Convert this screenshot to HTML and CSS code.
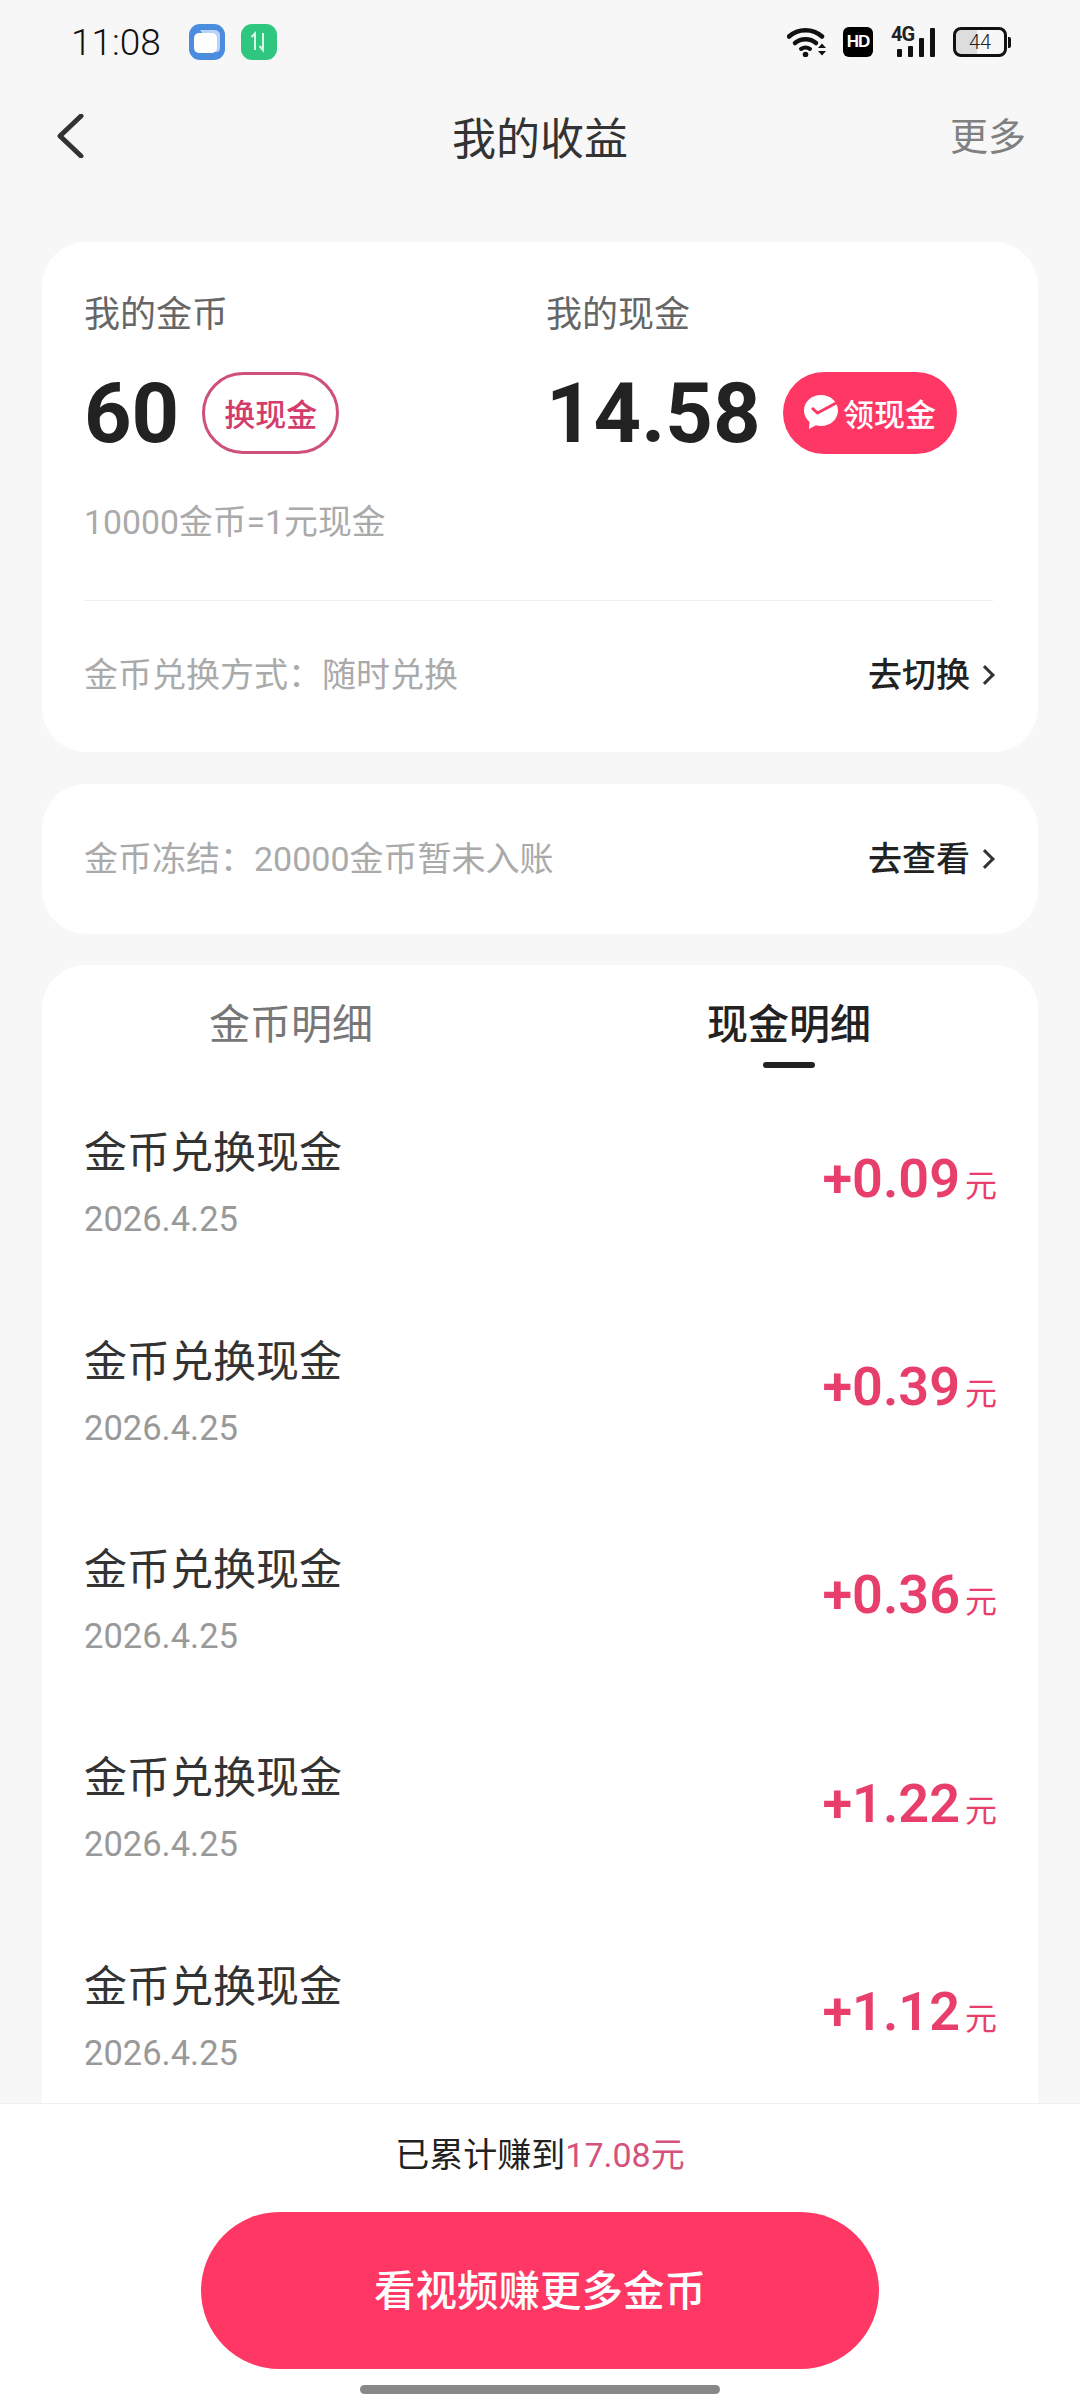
FILE: index.html
```html
<!DOCTYPE html>
<html lang="zh-CN">
<head>
    <meta charset="UTF-8">
    <meta name="viewport" content="width=device-width, initial-scale=1.0">
    <title>我的收益</title>
    <link rel="stylesheet" href="styles.css">
</head>
<body>
    <div class="status-bar">
        <div class="status-left">
            <span class="time">11:08</span>
            <svg class="app-icon first" width="36" height="36" viewBox="0 0 36 36">
                <rect width="36" height="36" rx="11" fill="#4a8ddf"/>
                <path d="M11 6h15a5 5 0 0 1 5 5v13a4 4 0 0 1-4 4z" fill="#b9d2f5"/>
                <rect x="5" y="9" width="23" height="20" rx="5" fill="#fff"/>
            </svg>
            <svg class="app-icon" width="36" height="36" viewBox="0 0 36 36">
                <rect width="36" height="36" rx="11" fill="#2fc77f"/>
                <path d="M10.500 13l3.500-3.500V26M22 9v17l-3.500-4" fill="none" stroke="#d8f7e6" stroke-width="2"/>
            </svg>
        </div>
        <div class="status-right">
            <svg width="41" height="30" viewBox="0 0 41 30">
                <path d="M2 9.500C11 1 26 1 35 9.500" fill="none" stroke="#111" stroke-width="4.500" stroke-linecap="round"/>
                <path d="M8 16c6-5 15-5 21 0" fill="none" stroke="#111" stroke-width="4.500" stroke-linecap="round"/>
                <path d="M14 22c3-2 6-2 9 0" fill="none" stroke="#111" stroke-width="4" stroke-linecap="round"/>
                <circle cx="18.500" cy="27.500" r="2.800" fill="#111"/>
                <path d="M31 21l4-4.500 4 4.500zM31 24l4 4.500 4-4.500z" fill="#111"/>
            </svg>
            <span class="hd-badge">HD</span>
            <div class="signal">
                <span class="signal-label">4G</span>
                <i class="bar-1"></i><i class="bar-2"></i><i class="bar-3"></i><i class="bar-4"></i>
            </div>
            <div class="battery">
                <div class="battery-body"><span>44</span></div>
                <div class="battery-tip"></div>
            </div>
        </div>
    </div>

    <div class="nav-bar">
        <svg class="back" width="28" height="44" viewBox="0 0 28 44">
            <path d="M25 2L4 22l21 20" fill="none" stroke="#333" stroke-width="5" stroke-linecap="round" stroke-linejoin="round"/>
        </svg>
        <h1>我的收益</h1>
        <span class="more">更多</span>
    </div>

    <div class="content">
        <div class="card summary">
            <div class="balances">
                <div>
                    <div class="balance-label">我的金币</div>
                    <div class="balance-row">
                        <span class="balance-value">60</span>
                        <span class="pill pill-outline">换现金</span>
                    </div>
                </div>
                <div>
                    <div class="balance-label">我的现金</div>
                    <div class="balance-row">
                        <span class="balance-value">14.58</span>
                        <span class="pill pill-solid">
                            <svg width="36" height="36" viewBox="0 0 36 36">
                                <path d="M18 1c9.500 0 17 6.800 17 15.500S27.500 32 18 32c-1.800 0-3.500-.3-5-.7L6 35l.5-7C3 25 1 21 1 16.500 1 7.800 8.500 1 18 1z" fill="#fff"/>
                                <path d="M9 14l5.500 5L35 8" fill="none" stroke="#ff3765" stroke-width="3"/>
                            </svg>
                            领现金
                        </span>
                    </div>
                </div>
            </div>
            <div class="rate">10000金币=1元现金</div>
            <div class="divider"></div>
            <div class="info-row">
                <span class="info-text">金币兑换方式：随时兑换</span>
                <span class="info-link">去切换<i class="chevron"></i></span>
            </div>
        </div>

        <div class="card frozen">
            <div class="info-row">
                <span class="info-text">金币冻结：20000金币暂未入账</span>
                <span class="info-link">去查看<i class="chevron"></i></span>
            </div>
        </div>

        <div class="card details">
            <div class="tabs">
                <div class="tab">金币明细</div>
                <div class="tab active">现金明细</div>
            </div>
            <div class="record">
                <div><div class="record-title">金币兑换现金</div><div class="record-date">2026.4.25</div></div>
                <div class="amount">+0.09<small>元</small></div>
            </div>
            <div class="record">
                <div><div class="record-title">金币兑换现金</div><div class="record-date">2026.4.25</div></div>
                <div class="amount">+0.39<small>元</small></div>
            </div>
            <div class="record">
                <div><div class="record-title">金币兑换现金</div><div class="record-date">2026.4.25</div></div>
                <div class="amount">+0.36<small>元</small></div>
            </div>
            <div class="record">
                <div><div class="record-title">金币兑换现金</div><div class="record-date">2026.4.25</div></div>
                <div class="amount">+1.22<small>元</small></div>
            </div>
            <div class="record">
                <div><div class="record-title">金币兑换现金</div><div class="record-date">2026.4.25</div></div>
                <div class="amount">+1.12<small>元</small></div>
            </div>
        </div>
    </div>

    <div class="footer">
        <div class="total">已累计赚到<span>17.08元</span></div>
        <button type="button" class="earn-button">看视频赚更多金币</button>
        <div class="home-bar"></div>
    </div>
</body>
</html>
```

FILE: styles.css
```css
* {
    box-sizing: border-box;
}

body {
    font-family: Roboto, "Noto Sans CJK SC", sans-serif;
    margin: 0;
    width: 1080px;
    height: 2400px;
    overflow: hidden;
    background-color: #f7f7f7;
    color: #222;
    display: flex;
    flex-direction: column;
}

/* status bar */
.status-bar {
    height: 84px;
    flex: none;
    padding: 0 69px 0 71px;
    display: flex;
    justify-content: space-between;
    align-items: center;
}

.status-left {
    display: flex;
    align-items: center;
}

.time {
    font-size: 37px;
    font-weight: 300;
    width: 118px;
    color: #111;
}

.app-icon {
    display: block;
    margin-right: 16px;
}

.status-right {
    display: flex;
    align-items: center;
}

.hd-badge {
    width: 30px;
    height: 30px;
    margin-left: 15px;
    border-radius: 6px;
    background-color: #000;
    color: #fff;
    font-family: "Liberation Sans", sans-serif;
    font-size: 17px;
    font-weight: bold;
    line-height: 30px;
    text-align: center;
    letter-spacing: -1px;
}

.signal {
    width: 44px;
    height: 30px;
    margin-left: 18px;
    position: relative;
}

.signal-label {
    position: absolute;
    left: 0;
    top: -2px;
    font-size: 20px;
    font-weight: bold;
    line-height: 18px;
    letter-spacing: -1px;
}

.signal i {
    position: absolute;
    bottom: 0;
    width: 5px;
    background-color: #111;
    border-radius: 1px;
}

.bar-1 { left: 6px; height: 8px; }
.bar-2 { left: 17px; height: 11px; }
.bar-3 { left: 28px; height: 19px; }
.bar-4 { left: 39px; height: 29px; }

.battery {
    margin-left: 18px;
    display: flex;
    align-items: center;
}

.battery-body {
    width: 54px;
    height: 30px;
    border: 3px solid #111;
    border-radius: 8px;
    background: linear-gradient(to right, #ddd 44%, #f7f7f7 44%);
    font-size: 20px;
    font-weight: 300;
    line-height: 24px;
    text-align: center;
}

.battery-tip {
    width: 3px;
    height: 11px;
    margin-left: 1px;
    background-color: #111;
    border-radius: 0 2px 2px 0;
}

/* nav */
.nav-bar {
    height: 104px;
    flex: none;
    padding: 0 54px 0 56px;
    display: flex;
    align-items: center;
    justify-content: space-between;
    position: relative;
}

.nav-bar h1 {
    position: absolute;
    left: 0;
    right: 0;
    margin: 0;
    font-size: 44px;
    font-weight: 400;
    text-align: center;
    color: #333;
}

.more {
    margin-bottom: 6px;
    font-size: 38px;
    color: #808080;
}

/* cards */
.content {
    flex: 1;
    min-height: 0;
    overflow: hidden;
    padding: 54px 42px 0;
    display: flex;
    flex-direction: column;
}

.card {
    flex: none;
    background-color: white;
    border-radius: 44px;
    padding: 0 42px;
}

.summary {
    height: 510px;
    padding-top: 51px;
}

.balances {
    display: grid;
    grid-template-columns: 462px 1fr;
}

.balance-label {
    font-size: 36px;
    line-height: 44px;
    color: #666;
}

.balance-row {
    height: 82px;
    margin-top: 35px;
    display: flex;
    align-items: center;
}

.balance-value {
    font-size: 83px;
    font-weight: bold;
    line-height: 81px;
    margin-right: 23px;
    color: #222;
}

.pill {
    height: 82px;
    padding-bottom: 2px;
    border-radius: 41px;
    font-size: 31px;
    font-weight: 500;
    display: flex;
    align-items: center;
    justify-content: center;
}

.pill-outline {
    width: 137px;
    border: 3px solid #cf5078;
    color: #d43c6c;
}

.pill-solid {
    width: 174px;
    margin-left: -1px;
    gap: 4px;
    background-color: #ff3765;
    color: #fff;
}

.rate {
    margin-top: 47px;
    font-size: 33.800px;
    line-height: 44px;
    color: #aaa;
}

.divider {
    height: 1px;
    margin: 55px 3px 0 0;
    background-color: #eee;
}

.summary .info-row {
    margin-top: 52px;
}

.info-row {
    display: flex;
    justify-content: space-between;
    align-items: center;
    line-height: 44px;
}

.info-text {
    font-size: 34px;
    color: #aaa;
}

.info-link {
    font-size: 34px;
    font-weight: 500;
    color: #222;
    display: flex;
    align-items: center;
}

.chevron {
    width: 14px;
    height: 14px;
    margin: 0 4px 0 8px;
    border-top: 3px solid #333;
    border-right: 3px solid #333;
    transform: rotate(45deg);
}

.frozen {
    height: 150px;
    margin-top: 32px;
    display: flex;
    flex-direction: column;
    justify-content: center;
}

.details {
    flex: 1;
    min-height: 0;
    margin-top: 31px;
    border-radius: 44px 44px 0 0;
    padding-top: 30px;
}

.tabs {
    margin: 0 -42px 11px;
    display: grid;
    grid-template-columns: 1fr 1fr;
}

.tab {
    height: 73px;
    font-size: 41px;
    line-height: 60px;
    text-align: center;
    color: #777;
    position: relative;
}

.tab.active {
    font-weight: 500;
    color: #222;
}

.tab.active::after {
    content: "";
    position: absolute;
    left: 50%;
    bottom: 0;
    width: 52px;
    height: 6px;
    margin-left: -26px;
    border-radius: 3px;
    background-color: #222;
}

.record {
    height: 208.4px;
    display: flex;
    justify-content: space-between;
    align-items: center;
}

.record-title {
    font-size: 43px;
    line-height: 60px;
    color: #333;
}

.record-date {
    margin-top: 12px;
    font-size: 34.500px;
    line-height: 48px;
    color: #999;
}

.amount {
    margin-right: -1px;
    padding-bottom: 10px;
    font-size: 54px;
    font-weight: 600;
    color: #e83e6c;
}

.amount small {
    margin-left: 5px;
    font-size: 32px;
    font-weight: 400;
}

/* footer */
.footer {
    height: 297px;
    flex: none;
    padding-top: 27px;
    background-color: white;
    border-top: 1px solid #f0f0f0;
    display: flex;
    flex-direction: column;
    align-items: center;
}

.total {
    font-size: 34px;
    line-height: 48px;
    color: #222;
}

.total span {
    color: #d4527c;
}

.earn-button {
    width: 678px;
    height: 157px;
    margin-top: 33px;
    padding: 0 0 6px;
    border: none;
    border-radius: 79px;
    background-color: #ff3765;
    color: white;
    font-family: inherit;
    font-size: 41.500px;
    font-weight: 500;
    cursor: pointer;
}

.home-bar {
    width: 360px;
    height: 9px;
    margin-top: 16px;
    border-radius: 5px;
    background-color: #888;
}
```
